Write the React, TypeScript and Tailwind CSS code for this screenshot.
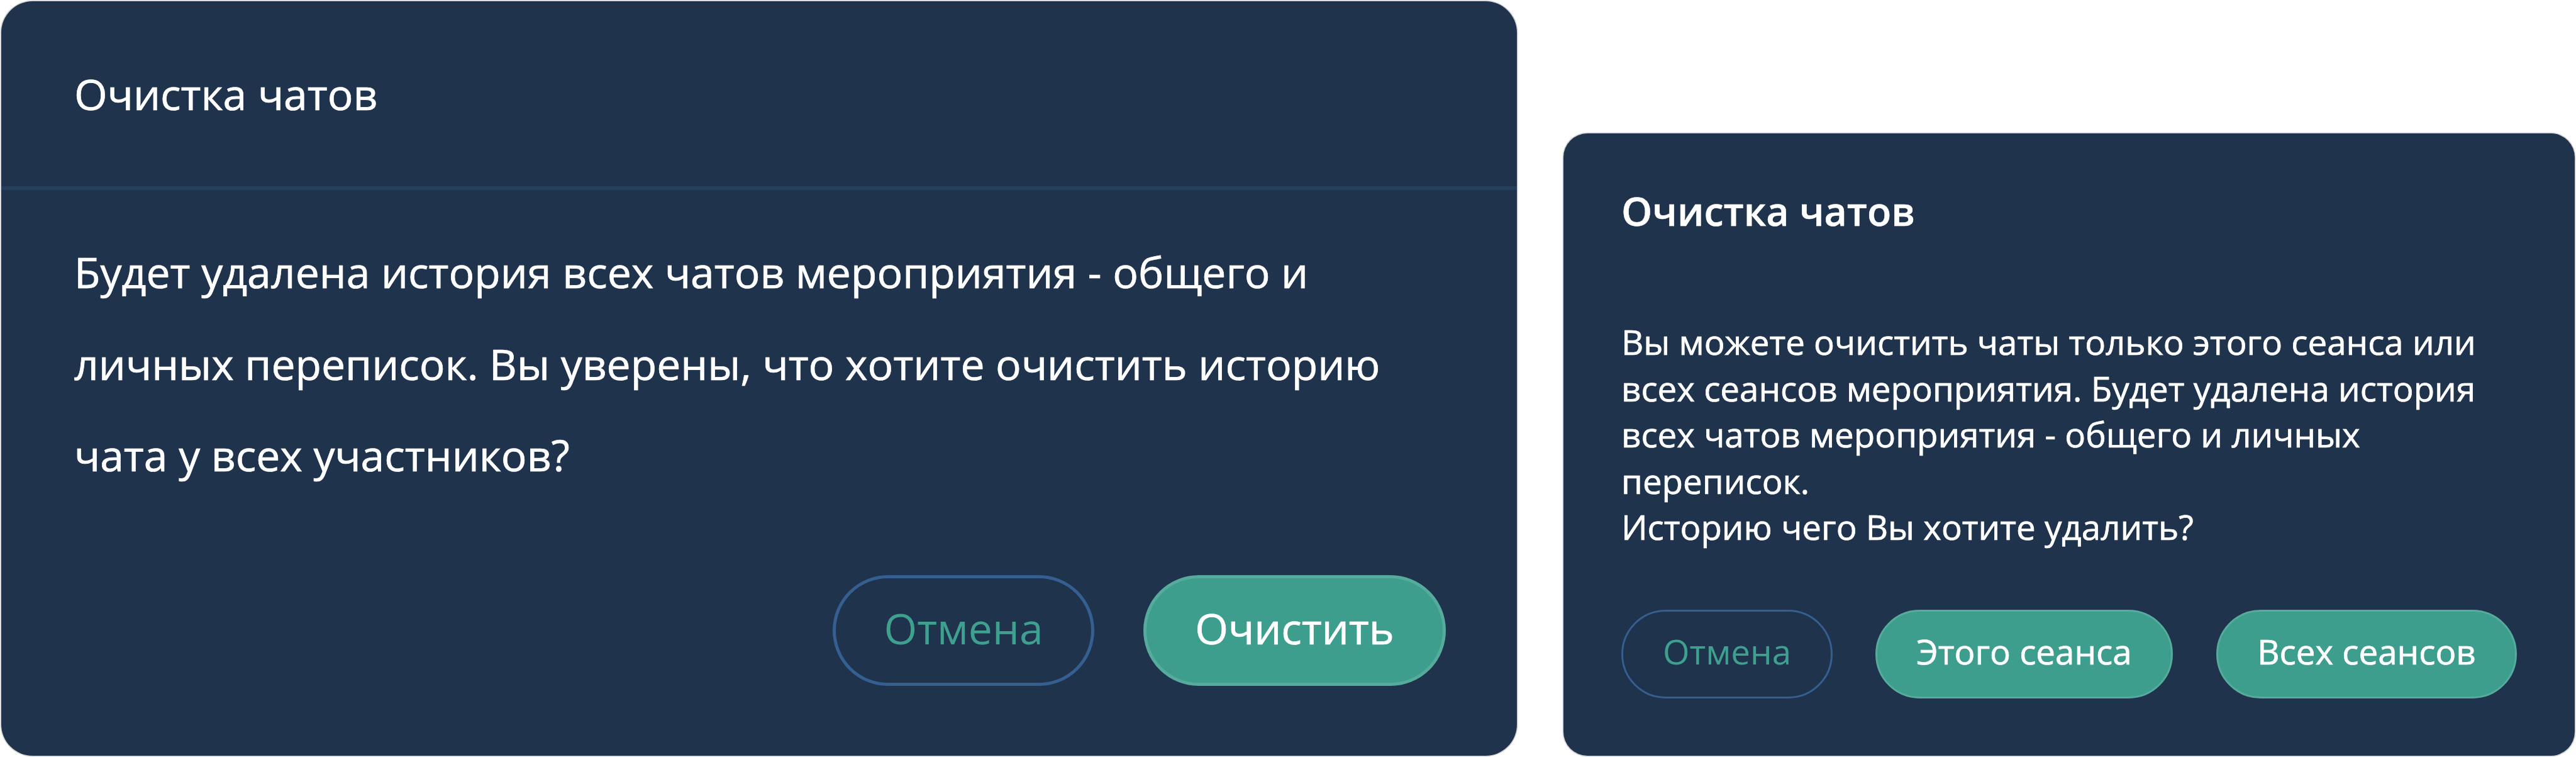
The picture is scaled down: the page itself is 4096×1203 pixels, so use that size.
import type { ReactNode } from "react";
import clsx from "clsx";

type ButtonProps = {
  variant: "outline" | "solid";
  className?: string;
  children: ReactNode;
};

function Button({ variant, className, children }: ButtonProps) {
  return (
    <button
      type="button"
      className={clsx(
        "flex shrink-0 items-center justify-center rounded-full pb-2 whitespace-nowrap",
        variant === "outline"
          ? "border-[#365f91] text-[#3fa08f]"
          : "border-[#56ab9c] bg-[#3e9e8d] text-white [-webkit-text-stroke:0.7px_white]",
        className
      )}
    >
      {children}
    </button>
  );
}

function ClearChatsDialog() {
  return (
    <section className="mt-0.5 ml-0.5 flex h-[1199px] w-[2410px] shrink-0 flex-col overflow-hidden rounded-[50px] bg-[#1f334c] text-[67.85px] text-white ring-[1.5px] ring-[#d0d0d0]">
      <header className="flex h-[300px] shrink-0 items-center border-b-6 border-[#243f5c] pl-[116px]">
        <h2 className="[-webkit-text-stroke:0.7px_white]">Очистка чатов</h2>
      </header>
      <p className="pt-[57px] pl-[116px] leading-[145.7px] whitespace-nowrap [-webkit-text-stroke:0.7px_white]">
        Будет удалена история всех чатов мероприятия - общего и
        <br />
        личных переписок. Вы уверены, что хотите очистить историю
        <br />
        чата у всех участников?
      </p>
      <footer className="mt-[118px] flex justify-end gap-[78px] pr-[113px]">
        <Button variant="outline" className="h-[176px] w-[416px] border-5">
          Отмена
        </Button>
        <Button variant="solid" className="h-[176px] w-[481px] border-5">
          Очистить
        </Button>
      </footer>
    </section>
  );
}

function ClearSessionsDialog() {
  return (
    <section className="mt-[212px] ml-[74px] flex h-[989px] w-[1608px] shrink-0 flex-col overflow-hidden rounded-[38px] bg-[#1f334c] pl-[92px] text-[54.7px] text-white ring-[1.5px] ring-[#d0d0d0]">
      <h2 className="pt-[78px] text-[62.7px] leading-[90px] font-semibold [-webkit-text-stroke:0.5px_white]">
        Очистка чатов
      </h2>
      <p className="pt-[127px] leading-[73.5px] whitespace-nowrap [-webkit-text-stroke:0.7px_white]">
        Вы можете очистить чаты только этого сеанса или
        <br />
        всех сеансов мероприятия. Будет удалена история
        <br />
        всех чатов мероприятия - общего и личных
        <br />
        переписок.
        <br />
        Историю чего Вы хотите удалить?
      </p>
      <footer className="mt-[94.5px] flex">
        <Button variant="outline" className="h-[141px] w-[336px] border-3">
          Отмена
        </Button>
        <Button variant="solid" className="ml-[68px] h-[141px] w-[473px] border-3">
          Этого сеанса
        </Button>
        <Button variant="solid" className="ml-[69px] h-[141px] w-[478px] border-3">
          Всех сеансов
        </Button>
      </footer>
    </section>
  );
}

export default function App() {
  return (
    <main className="flex h-[1203px] w-[4096px] items-start overflow-hidden bg-white font-['Open_Sans',sans-serif]">
      <ClearChatsDialog />
      <ClearSessionsDialog />
    </main>
  );
}
